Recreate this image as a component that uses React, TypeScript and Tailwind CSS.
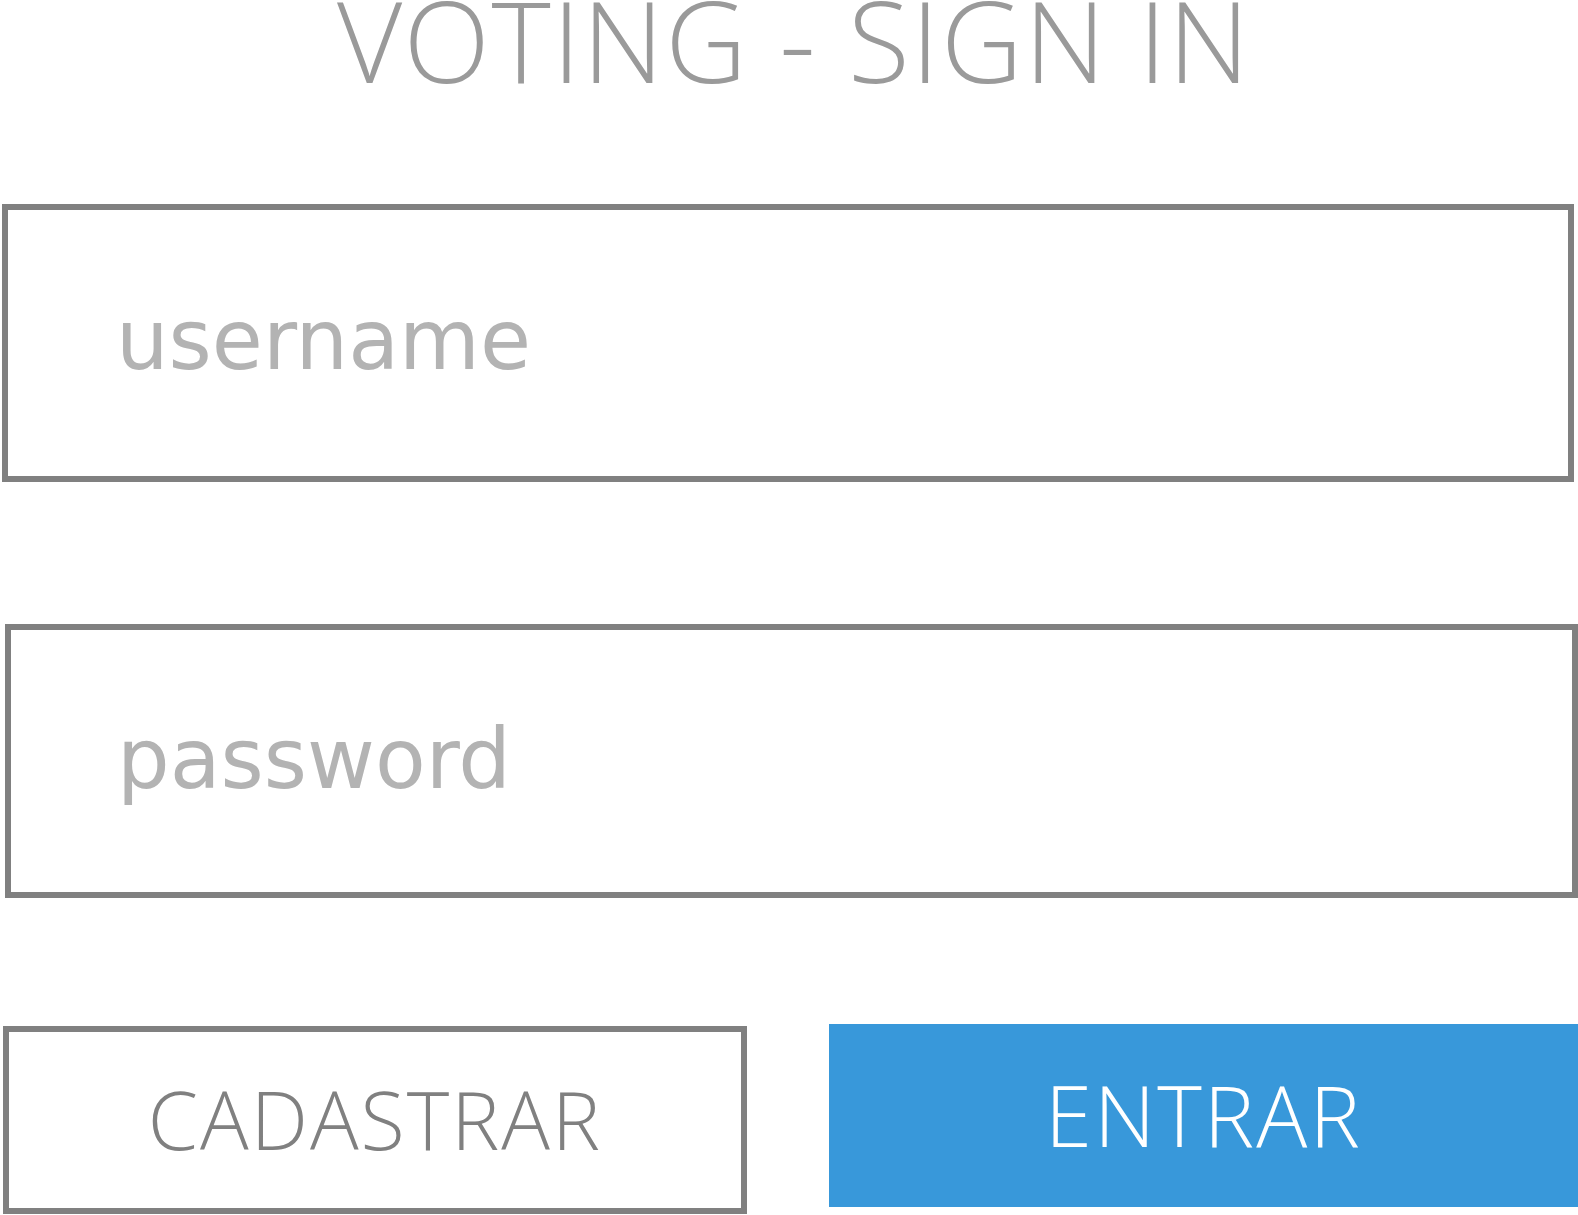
import React from 'react';

export default function App() {
    return (
        <div className="w-[1578px] h-[1215px] bg-white overflow-hidden flex flex-col">
            {/* Title */}
            <h1 className="pl-[10px] text-center text-[113px] leading-[78px] tracking-[1.5px] font-light text-[#9a9a9a] font-['Open_Sans',sans-serif] whitespace-nowrap">
                VOTING - SIGN IN
            </h1>

            {/* Username */}
            <div className="mt-[126px] ml-[2px] w-[1572px] h-[278px] border-[6px] border-[#808080]">
                <input
                    type="text"
                    placeholder="username"
                    className="w-full h-full pl-[108px] pb-[6px] outline-none bg-transparent text-[83px] text-[#808080] placeholder:text-[#b3b3b3] font-['DejaVu_Sans',sans-serif]"
                />
            </div>

            {/* Password */}
            <div className="mt-[142px] ml-[5px] w-[1573px] h-[274px] border-[6px] border-[#808080]">
                <input
                    type="password"
                    placeholder="password"
                    className="w-full h-full pl-[106px] pb-[4px] outline-none bg-transparent text-[83px] text-[#808080] placeholder:text-[#b3b3b3] font-['DejaVu_Sans',sans-serif]"
                />
            </div>

            {/* Actions */}
            <div className="mt-[126px] flex items-start">
                <button className="mt-[2px] ml-[3px] w-[744px] h-[188px] border-[6px] border-[#808080] bg-white text-[81px] leading-none tracking-[2px] font-light text-[#808080] font-['Open_Sans',sans-serif] pb-[4px]">
                    CADASTRAR
                </button>
                <button className="ml-[82px] w-[749px] h-[183px] bg-[#3898da] text-[85px] leading-none tracking-[2px] font-light text-white font-['Open_Sans',sans-serif] pb-[2px]">
                    ENTRAR
                </button>
            </div>
        </div>
    );
}
